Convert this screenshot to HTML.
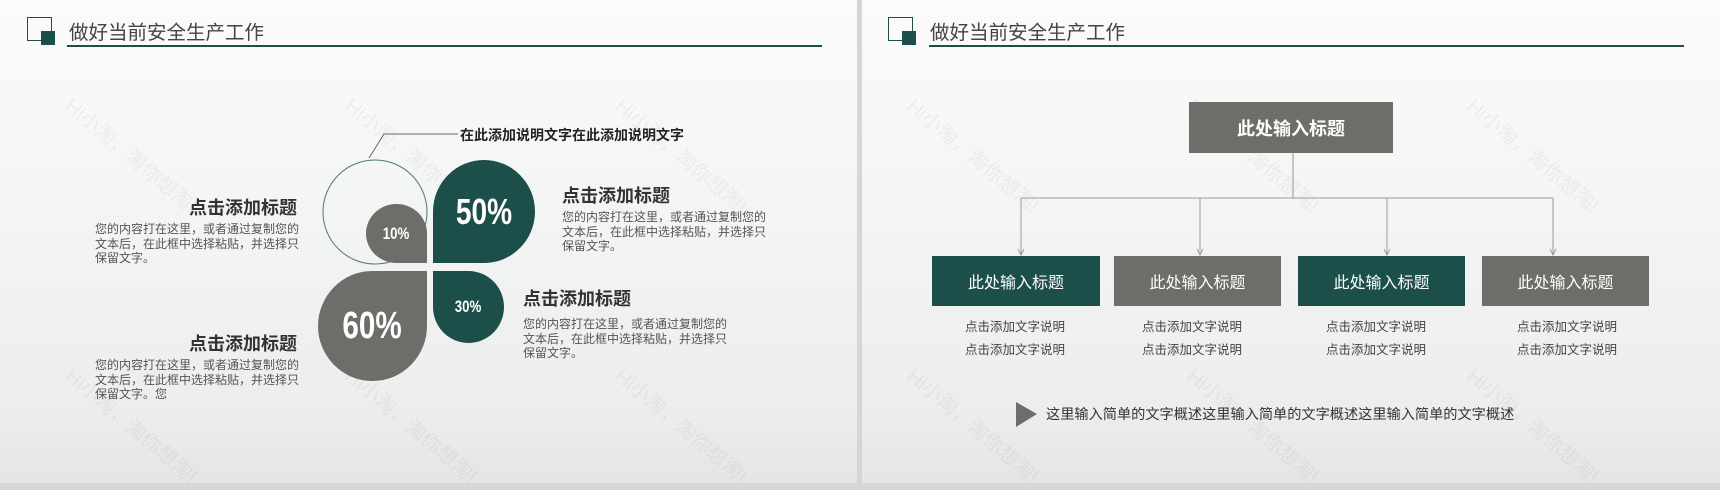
<!DOCTYPE html>
<html><head><meta charset="utf-8"><style>
*{margin:0;padding:0;box-sizing:border-box}
body{width:1720px;height:490px;background:#d6d6d6;position:relative;overflow:hidden;font-family:"Liberation Sans","Noto Sans CJK SC",sans-serif}
.slide{position:absolute;top:0;height:483px;background:linear-gradient(#fbfbfb 0%,#f4f5f5 40%,#eceded 85%,#e4e5e5 100%);overflow:hidden}
.a{position:absolute}
.wm{position:absolute;color:#000;opacity:.045;font-size:20px;transform:rotate(40deg);white-space:nowrap}
.t{position:absolute;white-space:nowrap}
.h{font-weight:bold;font-size:18px;color:#333}
.b{font-size:12px;color:#555;line-height:14.5px}
.leaf{position:absolute;display:flex;align-items:center;justify-content:center;color:#fff;font-weight:bold}
.leaf span{display:inline-block;transform:scaleX(.78)}
.box{position:absolute;color:#fff;display:flex;align-items:center;justify-content:center;font-size:16px}
.cap{position:absolute;font-size:12.5px;color:#444;line-height:23px;text-align:center;width:140px}
</style></head><body>
<div class="slide" style="left:0;width:857px">
  <div class="wm" style="left:50px;top:140px">Hi小淘，淘你想淘!</div>
  <div class="wm" style="left:330px;top:140px">Hi小淘，淘你想淘!</div>
  <div class="wm" style="left:600px;top:140px">Hi小淘，淘你想淘!</div>
  <div class="wm" style="left:50px;top:410px">Hi小淘，淘你想淘!</div>
  <div class="wm" style="left:330px;top:410px">Hi小淘，淘你想淘!</div>
  <div class="wm" style="left:600px;top:410px">Hi小淘，淘你想淘!</div>
  <div class="a" style="left:27px;top:17px;width:25px;height:24px;border:1.5px solid #1d4f4a"></div>
  <div class="a" style="left:41px;top:31px;width:14px;height:14px;background:#1d4f4a"></div>
  <div class="t" style="left:69px;top:16px;font-size:19.5px;color:#444">做好当前安全生产工作</div>
  <div class="a" style="left:67px;top:45px;width:755px;height:2px;background:#1d4f4a"></div>

  <svg class="a" style="left:0;top:0" width="857" height="483">
    <polyline points="458,134 384,134 369,158" fill="none" stroke="#667" stroke-width="1"/>
    <ellipse cx="375" cy="212" rx="52" ry="52" fill="none" stroke="#4f7a74" stroke-width="1"/>
  </svg>
  <div class="t" style="left:460px;top:125px;font-size:14px;font-weight:bold;color:#222">在此添加说明文字在此添加说明文字</div>
  <div class="leaf" style="left:366px;top:204px;width:61px;height:59px;background:#6f6d69;border-radius:50% 50% 0 50%;font-size:17px"><span>10%</span></div>
  <div class="leaf" style="left:433px;top:160px;width:102px;height:103px;background:#1d4f4a;border-radius:50% 50% 50% 0;font-size:36px"><span>50%</span></div>
  <div class="leaf" style="left:318px;top:271px;width:109px;height:110px;background:#6f6d69;border-radius:50% 0 50% 50%;font-size:38px"><span>60%</span></div>
  <div class="leaf" style="left:433px;top:271px;width:71px;height:72px;background:#1d4f4a;border-radius:0 50% 50% 50%;font-size:17px"><span>30%</span></div>

  <div class="t h" style="left:189px;top:194px">点击添加标题</div>
  <div class="t b" style="left:95px;top:222px">您的内容打在这里，或者通过复制您的<br>文本后，在此框中选择粘贴，并选择只<br>保留文字。</div>
  <div class="t h" style="left:189px;top:330px">点击添加标题</div>
  <div class="t b" style="left:95px;top:358px">您的内容打在这里，或者通过复制您的<br>文本后，在此框中选择粘贴，并选择只<br>保留文字。您</div>
  <div class="t h" style="left:562px;top:182px">点击添加标题</div>
  <div class="t b" style="left:562px;top:210px">您的内容打在这里，或者通过复制您的<br>文本后，在此框中选择粘贴，并选择只<br>保留文字。</div>
  <div class="t h" style="left:523px;top:285px">点击添加标题</div>
  <div class="t b" style="left:523px;top:317px">您的内容打在这里，或者通过复制您的<br>文本后，在此框中选择粘贴，并选择只<br>保留文字。</div>
</div>

<div class="slide" style="left:862px;width:858px">
  <div class="wm" style="left:30px;top:140px">Hi小淘，淘你想淘!</div>
  <div class="wm" style="left:310px;top:140px">Hi小淘，淘你想淘!</div>
  <div class="wm" style="left:590px;top:140px">Hi小淘，淘你想淘!</div>
  <div class="wm" style="left:30px;top:410px">Hi小淘，淘你想淘!</div>
  <div class="wm" style="left:310px;top:410px">Hi小淘，淘你想淘!</div>
  <div class="wm" style="left:590px;top:410px">Hi小淘，淘你想淘!</div>
</div>
<div class="a" style="left:888px;top:17px;width:25px;height:24px;border:1.5px solid #1d4f4a"></div>
<div class="a" style="left:902px;top:31px;width:14px;height:14px;background:#1d4f4a"></div>
<div class="t" style="left:930px;top:16px;font-size:19.5px;color:#444">做好当前安全生产工作</div>
<div class="a" style="left:929px;top:45px;width:755px;height:2px;background:#1d4f4a"></div>

<svg class="a" style="left:0;top:0" width="1720" height="490">
  <g stroke="#9a9a9a" stroke-width="1" fill="none">
    <line x1="1293" y1="153" x2="1293" y2="198"/>
    <line x1="1021" y1="198" x2="1553" y2="198"/>
    <line x1="1021" y1="198" x2="1021" y2="254"/>
    <line x1="1200" y1="198" x2="1200" y2="254"/>
    <line x1="1387" y1="198" x2="1387" y2="254"/>
    <line x1="1553" y1="198" x2="1553" y2="254"/>
    <polyline points="1018,249 1021,255 1024,249"/>
    <polyline points="1197,249 1200,255 1203,249"/>
    <polyline points="1384,249 1387,255 1390,249"/>
    <polyline points="1550,249 1553,255 1556,249"/>
  </g>
  <polygon points="1016,402 1037,414 1016,427" fill="#6f6d69"/>
</svg>
<div class="box" style="left:1189px;top:102px;width:204px;height:51px;background:#6f6d69;font-weight:bold;font-size:18px">此处输入标题</div>
<div class="box" style="left:932px;top:256px;width:168px;height:50px;background:#1d4f4a">此处输入标题</div>
<div class="box" style="left:1114px;top:256px;width:167px;height:50px;background:#6f6d69">此处输入标题</div>
<div class="box" style="left:1298px;top:256px;width:167px;height:50px;background:#1d4f4a">此处输入标题</div>
<div class="box" style="left:1482px;top:256px;width:167px;height:50px;background:#6f6d69">此处输入标题</div>
<div class="cap" style="left:945px;top:316px">点击添加文字说明<br>点击添加文字说明</div>
<div class="cap" style="left:1122px;top:316px">点击添加文字说明<br>点击添加文字说明</div>
<div class="cap" style="left:1306px;top:316px">点击添加文字说明<br>点击添加文字说明</div>
<div class="cap" style="left:1497px;top:316px">点击添加文字说明<br>点击添加文字说明</div>
<div class="t" style="left:1046px;top:404px;font-size:14.2px;color:#333">这里输入简单的文字概述这里输入简单的文字概述这里输入简单的文字概述</div>
</body></html>
